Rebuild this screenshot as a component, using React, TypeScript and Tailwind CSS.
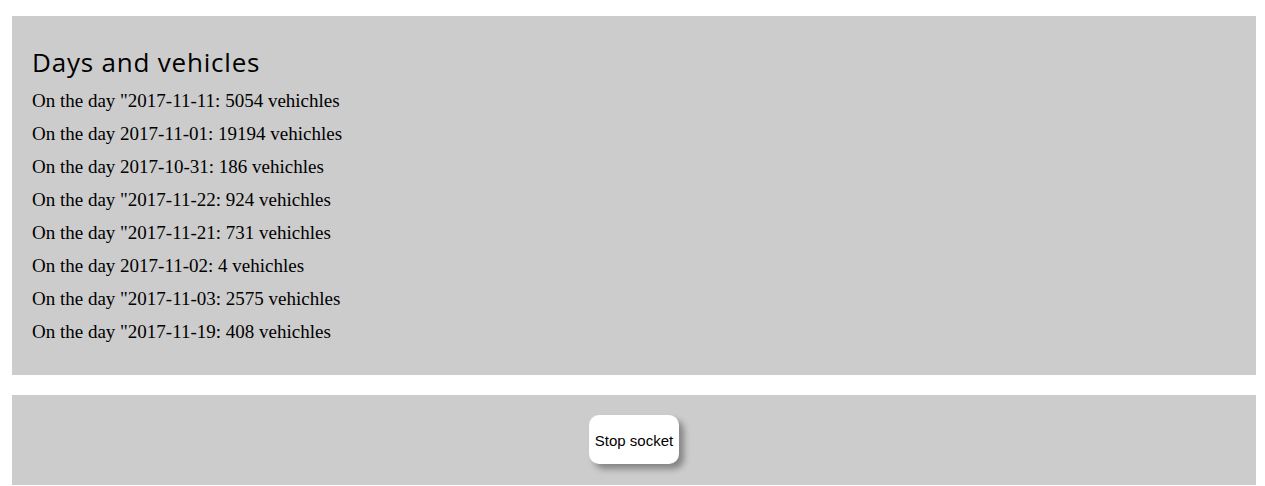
import React from "react";

const rows = [
  'On the day "2017-11-11: 5054 vehichles',
  "On the day 2017-11-01: 19194 vehichles",
  "On the day 2017-10-31: 186 vehichles",
  'On the day "2017-11-22: 924 vehichles',
  'On the day "2017-11-21: 731 vehichles',
  "On the day 2017-11-02: 4 vehichles",
  'On the day "2017-11-03: 2575 vehichles',
  'On the day "2017-11-19: 408 vehichles',
];

export default function App() {
  return (
    <div className="bg-white pl-[12px] pr-[9px] pt-[16px] w-full min-h-[486px]">
      <div className="bg-[#cccccc] h-[359px] px-5 pt-[28px]">
        <h2
          className="text-[26px] leading-[36px] text-black tracking-[0.8px]"
          style={{ fontFamily: "'Open Sans', sans-serif" }}
        >
          Days and vehicles
        </h2>
        <div className="flex flex-col mt-[4px]" style={{ fontFamily: "'Liberation Serif', serif" }}>
          {rows.map((r) => (
            <div key={r} className="text-[19px] leading-[33px] text-black">
              {r}
            </div>
          ))}
        </div>
      </div>
      <div className="bg-[#cccccc] h-[90px] mt-[20px] flex justify-center items-start pt-[20px]">
        <button
          className="w-[90px] h-[49px] bg-white rounded-[10px] text-[15px] text-black pt-[3px] shadow-[5px_5px_6px_rgba(0,0,0,0.35)]"
          style={{ fontFamily: "'Liberation Sans', Arial, sans-serif" }}
        >
          Stop socket
        </button>
      </div>
    </div>
  );
}
